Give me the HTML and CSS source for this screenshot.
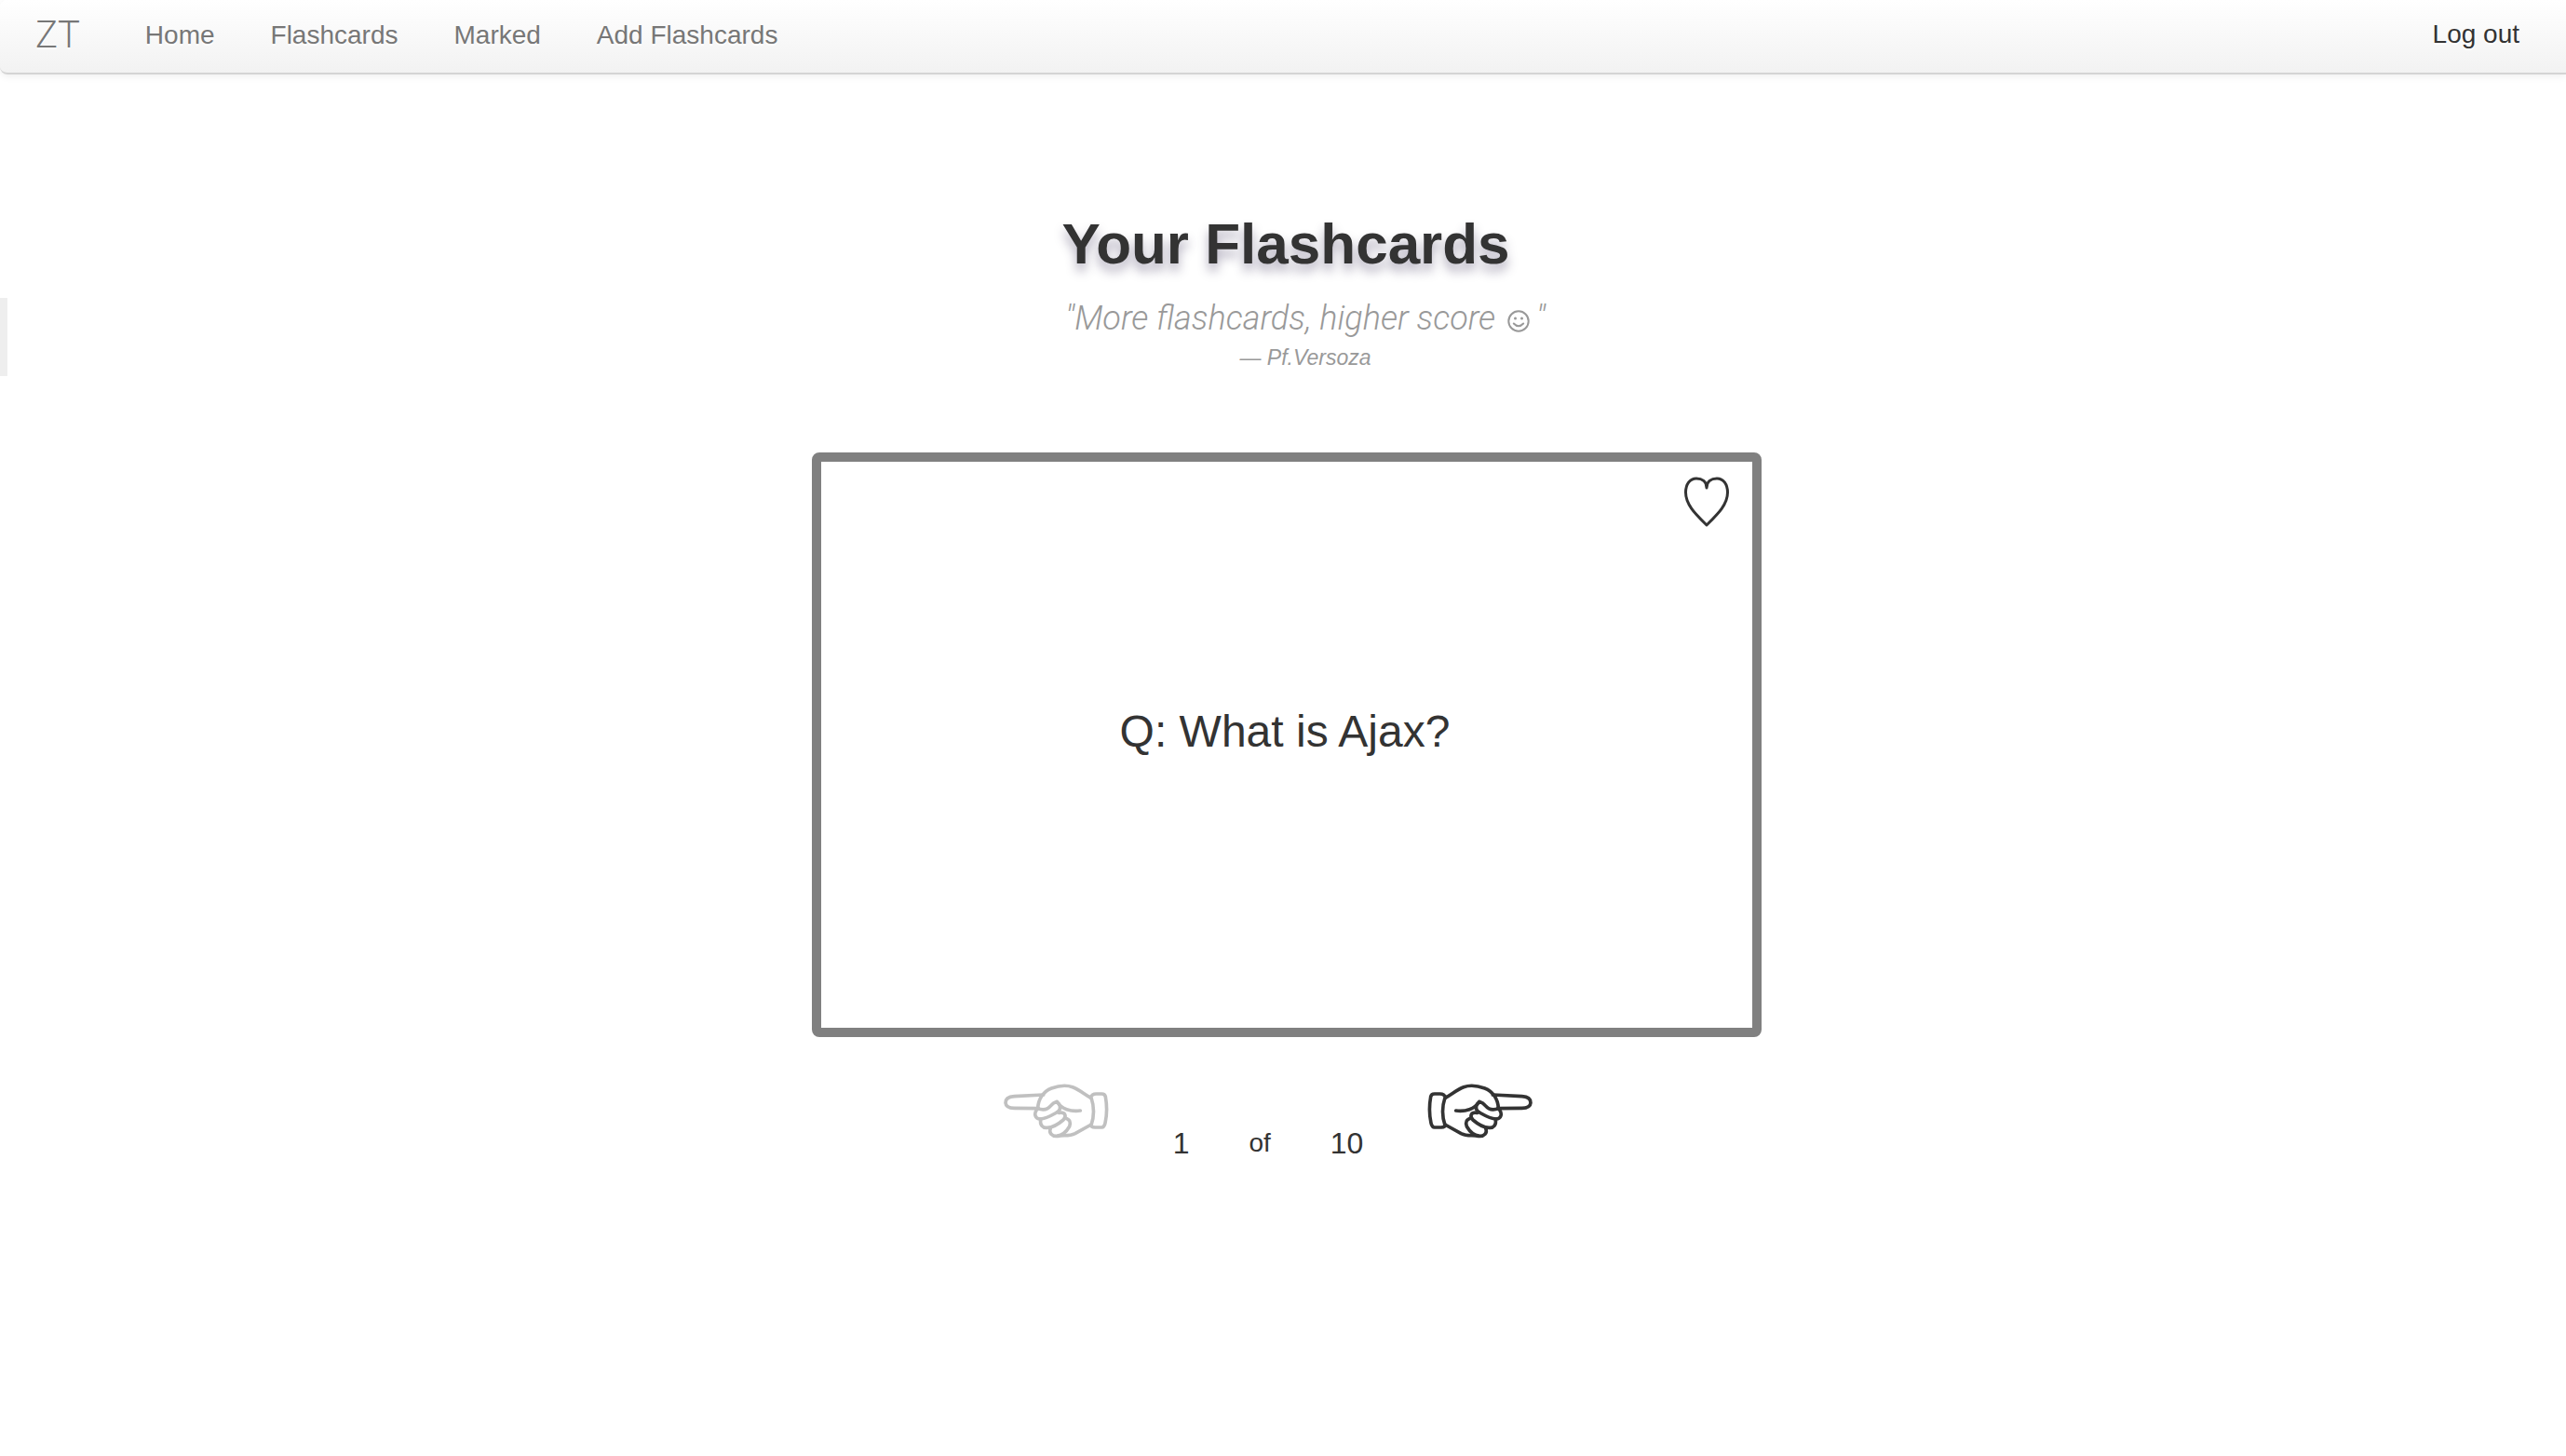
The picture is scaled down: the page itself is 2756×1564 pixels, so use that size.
FILE: index.html
```html
<!DOCTYPE html>
<html lang="en">
<head>
<meta charset="utf-8">
<title>Your Flashcards</title>
<link rel="stylesheet" href="styles.css">
</head>
<body>
<header class="navbar">
  <a class="brand" href="#">ZT</a>
  <nav class="nav">
    <a href="#">Home</a>
    <a href="#">Flashcards</a>
    <a href="#">Marked</a>
    <a href="#">Add Flashcards</a>
  </nav>
  <a class="logout" href="#">Log out</a>
</header>
<main>
  <h1 class="title">Your Flashcards</h1>
  <blockquote class="quote">
    <p>"More flashcards, higher score <svg class="smile" viewBox="0 0 24 24" aria-hidden="true"><circle cx="12" cy="12" r="10.7"/><path d="M6.8 14.5Q12 20 17.2 14.5"/><circle class="eye" cx="8.5" cy="9" r="1.5"/><circle class="eye" cx="15.5" cy="9" r="1.5"/></svg>"</p>
    <footer>— Pf.Versoza</footer>
  </blockquote>
  <section class="deck">
    <article class="card">
      <button class="heart" aria-label="Mark this card"><svg viewBox="0 0 48 54" aria-hidden="true"><path d="M24 12C24 5 19 2 13 2C6 2 1.500 8 1.500 17C1.500 30 12 40 24 52C36 40 46.500 30 46.500 17C46.500 8 42 2 35 2C29 2 24 5 24 12Z"/></svg></button>
      <p>Q: What is Ajax?</p>
    </article>
    <div class="pager">
      <button class="hand" disabled aria-label="Previous card">
        <svg viewBox="56 38 339 177" aria-hidden="true"><g id="hand"><path d="M184 74L90 79C72 80 62 88 62 100C63 112 74 117 90 117L167 118"/><path d="M166 118C167 88 184 63 210 53C232 45 258 42 278 49C300 57 318 74 336 83"/><path d="M336 83C340 72 346 71 354 71L372 71Q382 71 384 80Q392 125 383 165Q380 179 372 179L350 179C342 179 337 177 337 170M338 83Q353 128 338 172"/><path d="M166 118C185 126 198 121 208 109C214 101 221 98 228 96C242 120 272 129 303 125"/><path d="M166 118C150 135 158 152 174 152C192 152 213 139 229 130C238 123 241 113 233 102"/><path d="M175 152C172 172 182 182 196 180C214 180 233 168 248 155C260 141 254 129 234 132"/><path d="M207 181C200 198 213 208 227 207C247 205 260 190 268 176C273 162 269 153 254 149"/><path d="M230 207C250 203 266 209 286 199L338 170"/></g></svg>
      </button>
      <span class="count">1</span>
      <span class="of">of</span>
      <span class="count">10</span>
      <button class="hand" aria-label="Next card">
        <svg viewBox="56 38 339 177" aria-hidden="true"><use href="#hand" transform="translate(451 0) scale(-1 1)"/></svg>
      </button>
    </div>
  </section>
</main>
</body>
</html>
```
FILE: styles.css
```css
* { box-sizing: border-box; }
body {
  margin: 0;
  background: #fff;
  color: #333;
  font: 28px/40px "Liberation Sans", Arial, sans-serif;
}
a { color: inherit; text-decoration: none; }
p, h1, blockquote { margin: 0; }
button { padding: 0; border: 0; background: none; color: inherit; cursor: pointer; }
svg { display: block; fill: none; stroke: currentColor; stroke-linecap: round; stroke-linejoin: round; }

.navbar {
  display: flex;
  align-items: center;
  height: 80px;
  padding: 0 50px 2px 38px;
  border: solid #d4d4d4;
  border-width: 0 0 2px;
  border-radius: 8px 0 0 8px;
  box-shadow: 0 2px 8px rgba(0, 0, 0, .07);
  background: linear-gradient(#fff, #f2f2f2);
  color: #777;
  text-shadow: 0 2px 0 #fff;
}
.brand { font: 300 40px/40px Roboto, sans-serif; }
.nav { display: flex; gap: 60px; margin-left: 70px; }
.logout { margin: -3px 0 0 auto; color: #333; }

.title {
  padding: 142px 0 0 6px;
  font-size: 62px;
  line-height: 80px;
  text-align: center;
  text-shadow: 0 8px 12px rgba(60, 50, 90, .4);
}
.quote {
  margin-top: 18px;
  padding-left: 40px;
  border-left: 8px solid #eee;
  color: #999;
  font-style: italic;
  text-align: center;
}
.quote p { font: italic 300 36px/44px Roboto, sans-serif; }
.quote footer { font-size: 23px; }
.smile { display: inline-block; width: 24px; height: 24px; margin: 0 7px 0 4px; stroke-width: 2; vertical-align: -3px; }
.eye { fill: currentColor; stroke: none; }

.deck {
  display: flex;
  flex-direction: column;
  align-items: center;
  padding: 82px 0 0 8px;
}
.card {
  position: relative;
  display: grid;
  place-items: center;
  width: 90%;
  max-width: 1020px;
  height: 628px;
  padding: 0 4px 28px 0;
  border: 10px solid #808080;
  border-radius: 8px;
  font-size: 48px;
  line-height: 60px;
}
.heart { position: absolute; top: 16px; right: 25px; width: 48px; }
.heart svg { stroke-width: 3; }
.pager {
  display: flex;
  align-items: flex-end;
  gap: 64px;
  margin: 50px 40px 0 0;
  line-height: 32px;
}
.hand { width: 113px; margin: 0 5px 21px; }
.hand svg { stroke-width: 11; }
.hand:disabled { color: #c0c0c0; }
.count { font-size: 32px; }
```
